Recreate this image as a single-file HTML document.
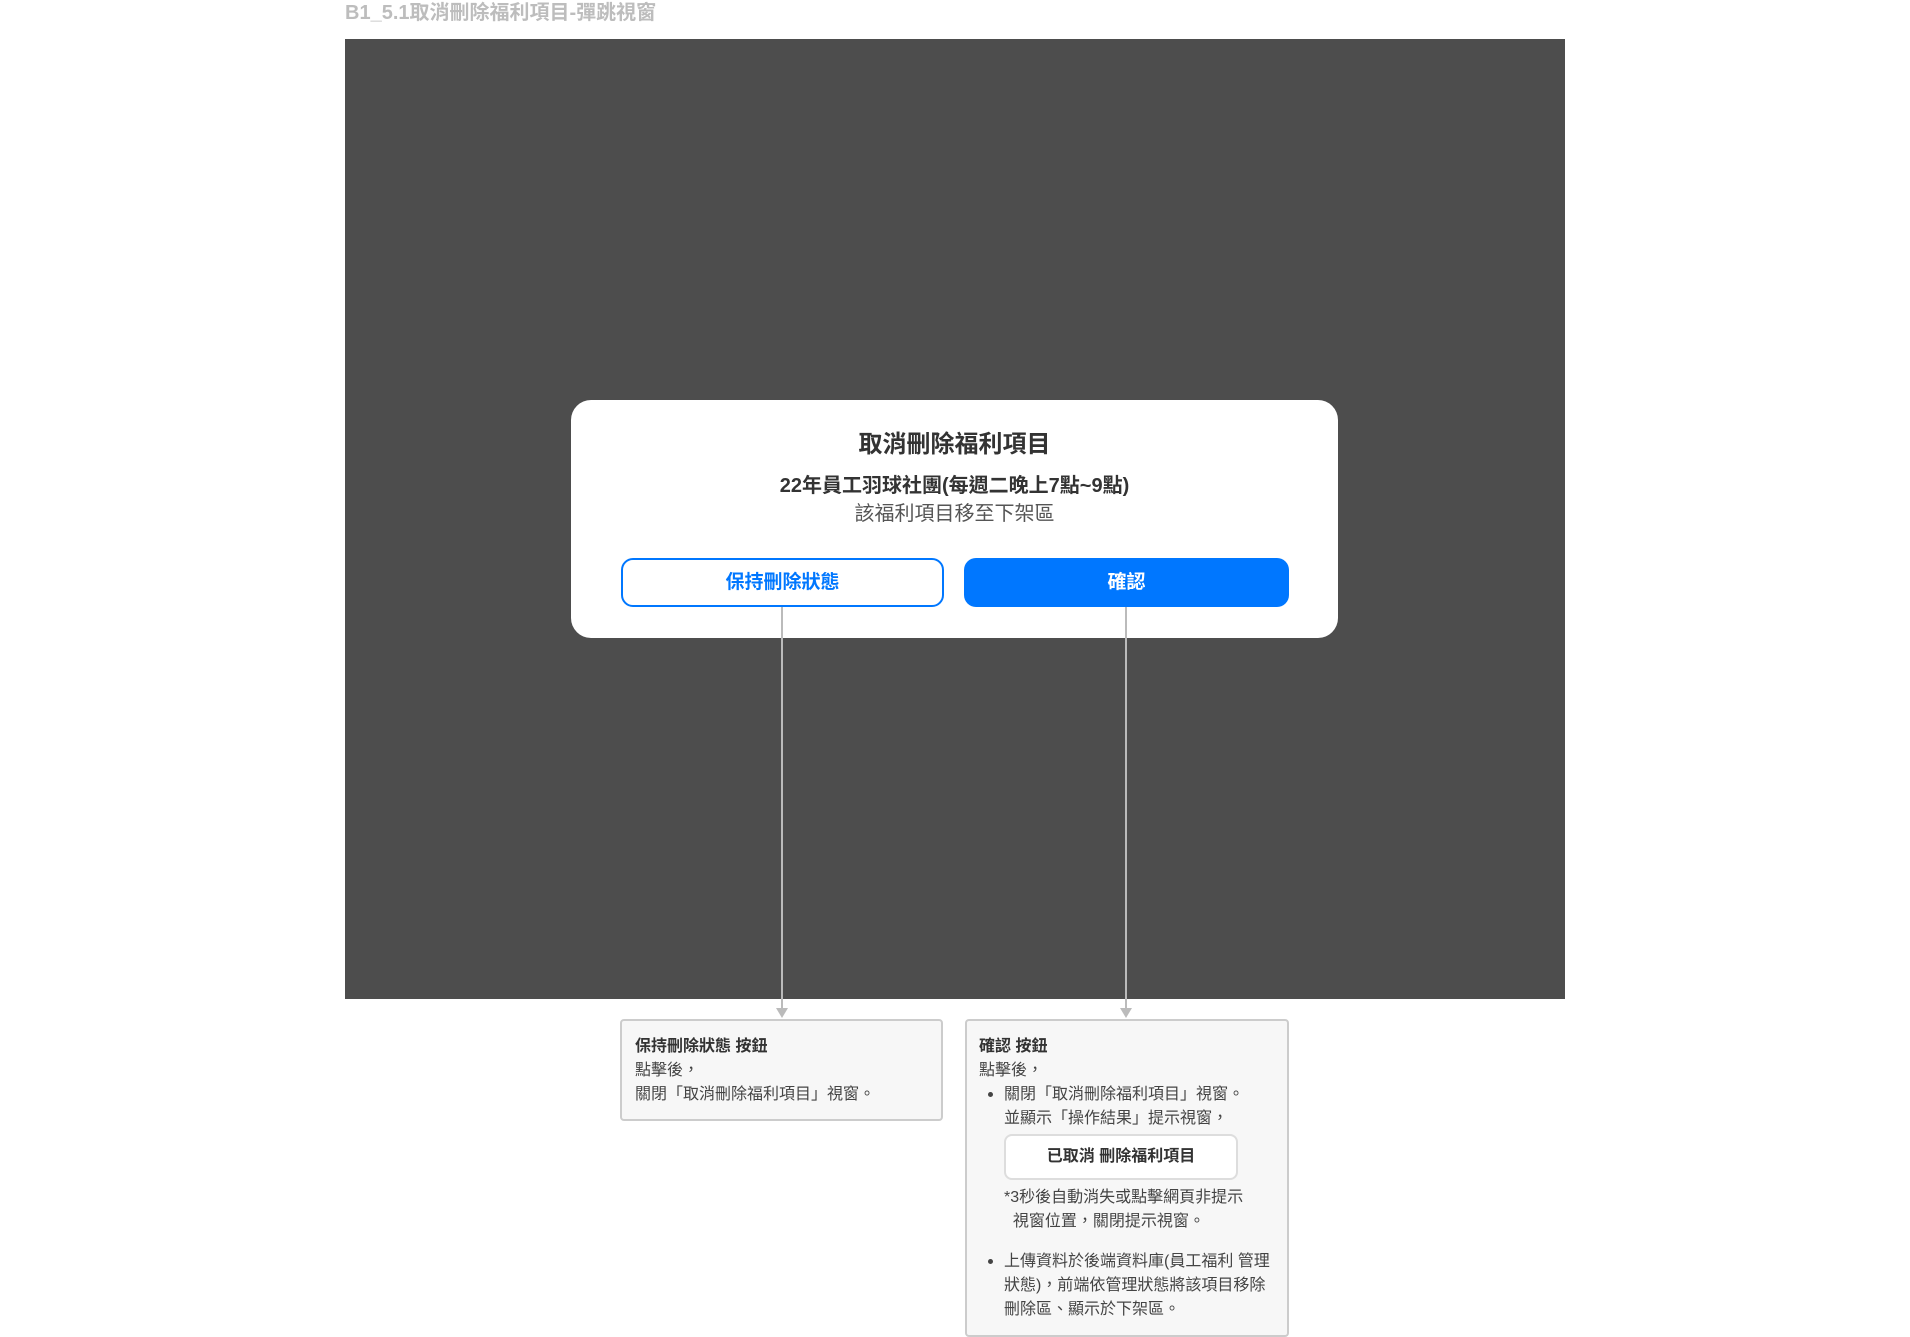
<!DOCTYPE html>
<html><head><meta charset="utf-8"><style>
*{margin:0;padding:0;box-sizing:border-box}
body{width:1910px;height:1337px;background:#fff;position:relative;overflow:hidden;font-family:"Liberation Sans","Noto Sans CJK TC",sans-serif;color:#333}
.a{position:absolute}
.t{white-space:nowrap}
.note{background:#f7f7f7;border:2px solid #ccc;border-radius:4px}
.n{font-size:16px;color:#444;line-height:24px}
</style></head><body>
<div class="a t" style="left:345px;top:0;font-size:20px;font-weight:bold;color:#bdbdbd;line-height:26px">B1_5.1取消刪除福利項目-彈跳視窗</div>
<div class="a" style="left:345px;top:39px;width:1220px;height:960px;background:#4d4d4d"></div>
<div class="a" style="left:571px;top:400px;width:767px;height:238px;background:#fff;border-radius:20px"></div>
<div class="a t" style="left:571px;width:767px;top:429px;text-align:center;font-size:24px;font-weight:bold;color:#333;line-height:32px">取消刪除福利項目</div>
<div class="a t" style="left:571px;width:767px;top:473px;text-align:center;font-size:20px;font-weight:bold;color:#333;line-height:26px">22年員工羽球社團(每週二晚上7點~9點)</div>
<div class="a t" style="left:571px;width:767px;top:501px;text-align:center;font-size:20px;color:#555;line-height:26px">該福利項目移至下架區</div>
<div class="a t" style="left:621px;top:558px;width:323px;height:49px;border:2px solid #0077ff;border-radius:12px;color:#0077ff;font-size:19px;font-weight:bold;text-align:center;line-height:45px">保持刪除狀態</div>
<div class="a t" style="left:964px;top:558px;width:325px;height:49px;background:#0077ff;border-radius:12px;color:#fff;font-size:19px;font-weight:bold;text-align:center;line-height:49px">確認</div>
<div class="a" style="left:781px;top:607px;width:2px;height:403px;background:#bbb"></div>
<div class="a" style="left:1125px;top:607px;width:2px;height:403px;background:#bbb"></div>
<div class="a" style="left:776px;top:1008px;border-left:6px solid transparent;border-right:6px solid transparent;border-top:10px solid #bbb"></div>
<div class="a" style="left:1120px;top:1008px;border-left:6px solid transparent;border-right:6px solid transparent;border-top:10px solid #bbb"></div>
<div class="a note" style="left:620px;top:1019px;width:323px;height:102px"></div>
<div class="a t n" style="left:635px;top:1035px"><b style="color:#333">保持刪除狀態 按鈕</b><br>點擊後，<br>關閉「取消刪除福利項目」視窗。</div>
<div class="a note" style="left:965px;top:1019px;width:324px;height:318px"></div>
<div class="a t n" style="left:979px;top:1035px"><b style="color:#333">確認 按鈕</b><br>點擊後，</div>
<div class="a" style="left:988px;top:1092px;width:5px;height:5px;border-radius:50%;background:#444"></div>
<div class="a t n" style="left:1004px;top:1083px">關閉「取消刪除福利項目」視窗。<br>並顯示「操作結果」提示視窗，</div>
<div class="a t" style="left:1004px;top:1134px;width:234px;height:46px;background:#fff;border:2px solid #ddd;border-radius:8px;text-align:center;line-height:42px;font-size:16px;font-weight:bold;color:#333">已取消 刪除福利項目</div>
<div class="a t n" style="left:1004px;top:1186px">*3秒後自動消失或點擊網頁非提示<br>&nbsp;&nbsp;視窗位置，關閉提示視窗。</div>
<div class="a" style="left:988px;top:1259px;width:5px;height:5px;border-radius:50%;background:#444"></div>
<div class="a t n" style="left:1004px;top:1250px">上傳資料於後端資料庫(員工福利 管理<br>狀態)，前端依管理狀態將該項目移除<br>刪除區、顯示於下架區。</div>
</body></html>
